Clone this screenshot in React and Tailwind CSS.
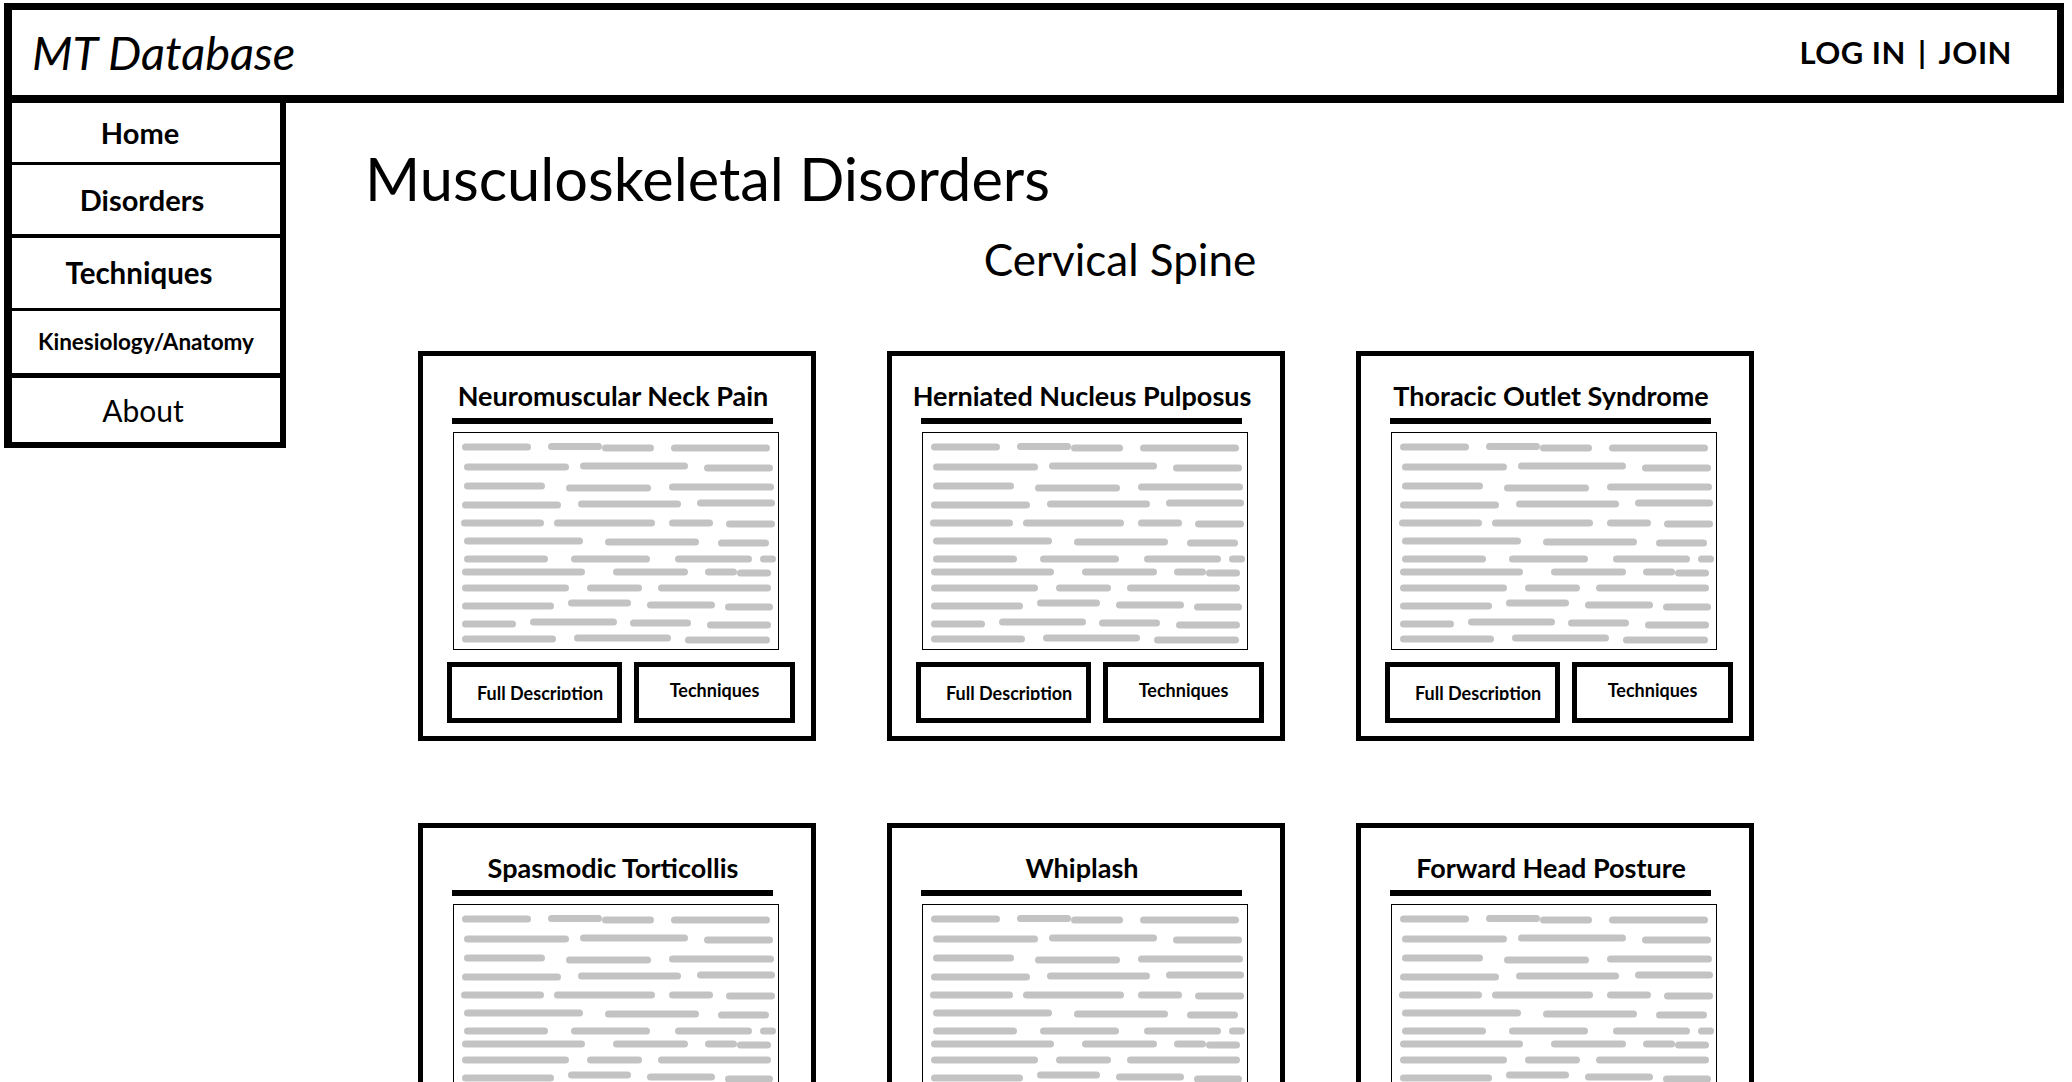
import React from "react";

// placeholder "text" strokes inside every card box: [x1, x2, y]
const LINES = [
  [8, 77, 14], [94, 148, 13.5], [148, 200, 15], [217, 316, 15],
  [10, 115, 34], [126, 234, 33], [250, 319, 35],
  [10, 91, 53], [112, 197, 55], [215, 320, 54],
  [8, 107, 72], [124, 227, 71], [243, 321, 70],
  [7, 90, 90], [100, 201, 90], [215, 259, 90], [272, 321, 91],
  [10, 129, 108], [151, 245, 109], [264, 315, 110],
  [10, 94, 126], [117, 196, 126], [221, 298, 126], [306, 322, 126],
  [8, 131, 139], [159, 234, 139], [251, 283, 139], [283, 317, 140],
  [8, 115, 155], [133, 188, 155], [204, 317, 155],
  [8, 100, 173], [114, 177, 170], [193, 261, 172], [271, 319, 174],
  [8, 62, 191], [76, 163, 189], [176, 237, 190], [253, 317, 192],
  [8, 102, 206], [120, 217, 205], [231, 316, 207],
];

const NAV = [
  { label: "Home", cls: "h-[62px] border-b-[3px] text-[29px] font-bold pr-[12px]" },
  { label: "Disorders", cls: "h-[73px] border-b-[4px] text-[29px] font-bold pr-[8px]" },
  { label: "Techniques", cls: "h-[73px] border-b-[3px] text-[29.5px] font-bold pr-[14px]" },
  { label: "Kinesiology/Anatomy", cls: "h-[67px] border-b-[5px] text-[22.5px] font-bold" },
  { label: "About", cls: "h-[70px] border-b-[6px] text-[30px] pr-[6px]" },
];

const DISORDERS = [
  "Neuromuscular Neck Pain",
  "Herniated Nucleus Pulposus",
  "Thoracic Outlet Syndrome",
  "Spasmodic Torticollis",
  "Whiplash",
  "Forward Head Posture",
];

function Scribble() {
  return (
    <svg width="324" height="216" className="block">
      {LINES.map(([x1, x2, y], i) => (
        <line
          key={i}
          x1={x1 + 3.5}
          x2={x2 - 3.5}
          y1={y}
          y2={y}
          stroke="#c3c3c3"
          strokeWidth="7"
          strokeLinecap="round"
        />
      ))}
    </svg>
  );
}

function Card({ title }) {
  return (
    <div className="w-[398px] h-[390px] border-[5px] border-black flex flex-col">
      <div className="mt-[26px] h-[27px] pr-[8px] text-center font-bold text-[27px] leading-none whitespace-nowrap">
        {title}
      </div>
      <div className="ml-[29px] mt-[9px] w-[321px] h-[6px] bg-black" />
      <div className="ml-[30px] mt-[8px] w-[326px] h-[218px] border border-black">
        <Scribble />
      </div>
      <div className="ml-[24px] mt-[12px] flex gap-[12px]">
        <div className="w-[175px] h-[61px] border-[5px] border-black pt-[17px] pl-[25px]">
          <span className="block h-[16px] overflow-hidden font-bold text-[18px] leading-none whitespace-nowrap">
            Full Description
          </span>
        </div>
        <div className="w-[161px] h-[61px] border-[5px] border-black pt-[14px] text-center">
          <span className="block font-bold text-[18px] leading-none">Techniques</span>
        </div>
      </div>
    </div>
  );
}

export default function App() {
  return (
    <div className="min-h-screen bg-white text-black font-[Lato,sans-serif]">
      <header className="ml-[4px] mr-[8px] mt-[3px] h-[100px] border-[7px] border-l-[8px] border-b-[8px] border-black flex items-center justify-between pl-[20px] pr-[45px]">
        <span className="italic text-[47px] leading-none">MT Database</span>
        <span className="flex items-center gap-[12px] font-bold text-[31px] leading-none tracking-[0.5px]">
          <span>LOG IN</span>
          <span>|</span>
          <span>JOIN</span>
        </span>
      </header>

      <div className="flex items-start">
        <nav className="ml-[4px] w-[282px] shrink-0 border-l-[8px] border-r-[6px] border-black">
          {NAV.map((n) => (
            <div
              key={n.label}
              className={`${n.cls} border-black flex items-center justify-center leading-none`}
            >
              {n.label}
            </div>
          ))}
        </nav>

        <main className="flex-1 min-w-0">
          <h1 className="ml-[79px] mt-[46px] text-[59.5px] leading-none">
            Musculoskeletal Disorders
          </h1>
          <h2 className="mt-[28px] pr-[118px] text-center text-[44px] leading-none">
            Cervical Spine
          </h2>
          <div className="ml-[132px] mt-[70px] pb-[40px] grid grid-cols-[repeat(3,398px)] gap-x-[71px] gap-y-[82px]">
            {DISORDERS.map((d) => (
              <Card key={d} title={d} />
            ))}
          </div>
        </main>
      </div>
    </div>
  );
}
